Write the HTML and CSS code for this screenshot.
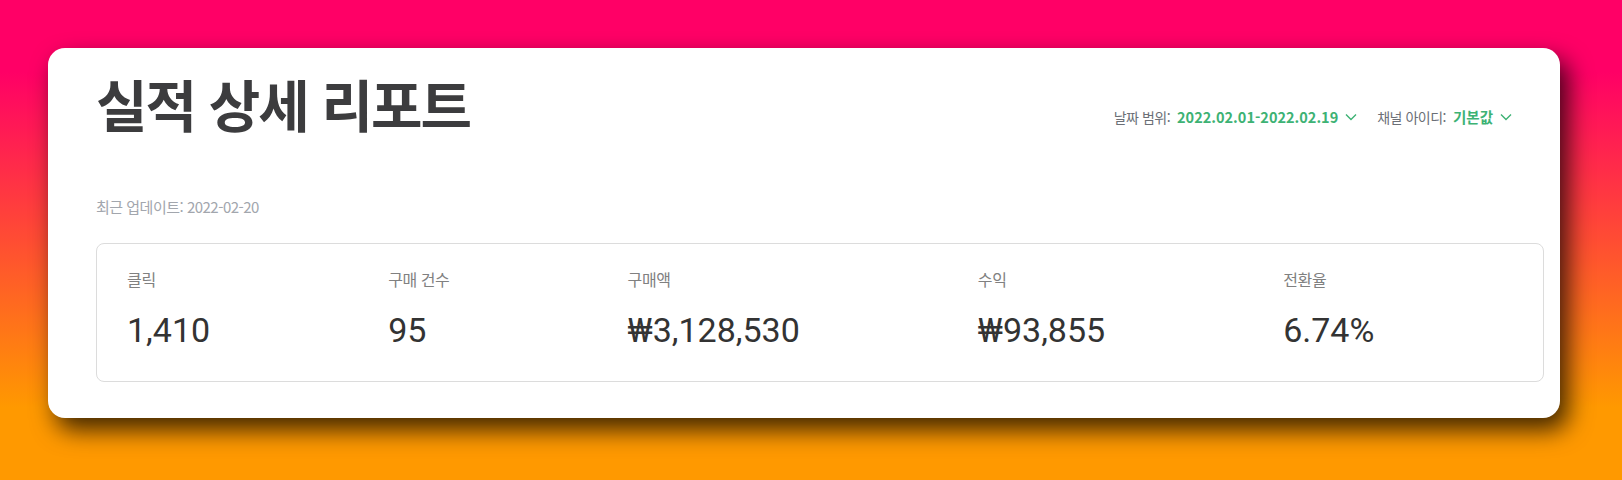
FILE: index.html
```html
<!DOCTYPE html>
<html lang="ko">
<head>
<meta charset="utf-8">
<title>실적 상세 리포트</title>
<link rel="stylesheet" href="styles.css">
</head>
<body>
<div class="page">
  <section class="card">
    <header class="header">
      <h1 class="title">실적 상세 리포트</h1>
      <div class="filters">
        <div class="filter">
          <span class="flabel">날짜 범위:</span>
          <span class="fvalue">2022.02.01-2022.02.19</span>
          <svg class="chev" width="12" height="8" viewBox="0 0 12 8"><polyline points="1,1.5 6,6.5 11,1.5" fill="none" stroke="currentColor" stroke-width="1.4"/></svg>
        </div>
        <div class="filter">
          <span class="flabel">채널 아이디:</span>
          <span class="fvalue">기본값</span>
          <svg class="chev" width="12" height="8" viewBox="0 0 12 8"><polyline points="1,1.5 6,6.5 11,1.5" fill="none" stroke="currentColor" stroke-width="1.4"/></svg>
        </div>
      </div>
    </header>
    <p class="updated">최근 업데이트: 2022-02-20</p>
    <div class="metrics">
      <div class="metric"><div class="mlabel">클릭</div><div class="mvalue">1,410</div></div>
      <div class="metric"><div class="mlabel">구매 건수</div><div class="mvalue">95</div></div>
      <div class="metric"><div class="mlabel">구매액</div><div class="mvalue">₩3,128,530</div></div>
      <div class="metric"><div class="mlabel">수익</div><div class="mvalue">₩93,855</div></div>
      <div class="metric"><div class="mlabel">전환율</div><div class="mvalue">6.74%</div></div>
    </div>
  </section>
</div>
</body>
</html>
```
FILE: styles.css
```css
html, body {
  margin: 0;
  padding: 0;
}
body {
  width: 1622px;
  height: 480px;
  overflow: hidden;
  font-family: "Noto Sans CJK KR", "Noto Sans", sans-serif;
  background: linear-gradient(180deg, #ff0066 0%, #ff0066 15%, #ff9900 85%, #ff9900 100%);
}
.page {
  padding: 48px 0 0 48px;
}
.card {
  box-sizing: border-box;
  width: 1512px;
  height: 370px;
  background: #ffffff;
  border-radius: 17px;
  padding: 23px 16px 36px 48px;
  box-shadow: 8px 12px 24px rgba(0, 0, 0, 0.75);
}
.header {
  display: flex;
  justify-content: space-between;
  align-items: flex-start;
  padding-right: 32px;
}
.title {
  margin: 0;
  font-size: 56px;
  line-height: 64px;
  font-weight: 700;
  letter-spacing: -2px;
  color: #3c3c3e;
}
.filters {
  display: flex;
  align-items: center;
  gap: 20px;
  margin-top: 36px;
}
.filter {
  display: flex;
  align-items: center;
  font-size: 14px;
  line-height: 20px;
}
.flabel {
  color: #6b6f76;
  letter-spacing: -0.5px;
  margin-right: 7px;
}
.fvalue {
  color: #3db274;
  font-weight: 700;
  font-size: 14.5px;
}
.chev {
  color: #3db274;
  margin-left: 7px;
}
.updated {
  margin: 62px 0 0 0;
  font-size: 15px;
  line-height: 20px;
  color: #a2a6ad;
  letter-spacing: -0.5px;
}
.metrics {
  margin-top: 26px;
  border: 1px solid #dcdcdc;
  border-radius: 8px;
  padding: 26px 30px 31px 30px;
  display: flex;
  gap: 178px;
}
.metric {
  display: flex;
  flex-direction: column;
}
.mlabel {
  font-family: Roboto, "Noto Sans CJK KR", sans-serif;
  font-size: 16px;
  line-height: 22px;
  color: #808080;
  letter-spacing: -0.3px;
}
.mvalue {
  margin-top: 18px;
  font-family: Roboto, "Noto Sans CJK KR", sans-serif;
  font-size: 34px;
  line-height: 40px;
  color: #333333;
}
```
